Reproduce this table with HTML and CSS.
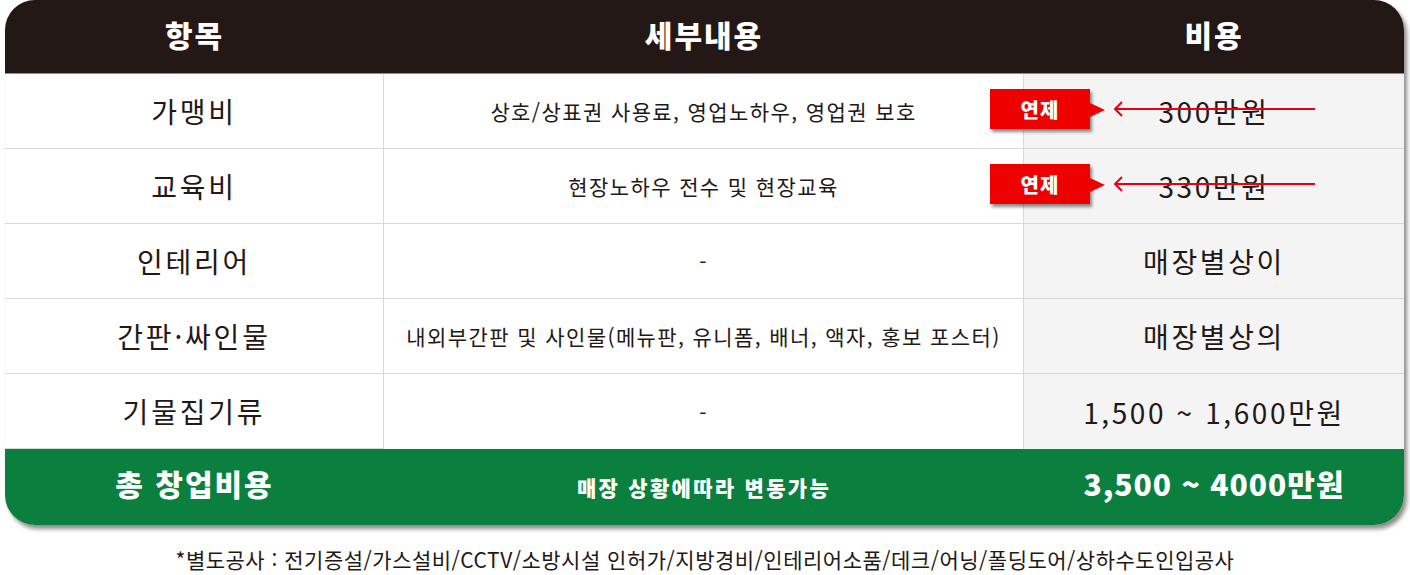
FILE: index.html
```html
<!DOCTYPE html>
<html lang="ko">
<head>
  <meta charset="UTF-8">
  <title>창업비용</title>
  <link rel="stylesheet" href="styles.css">
</head>
<body>
  <div class="cost-table">
    <div class="head">항목</div>
    <div class="head">세부내용</div>
    <div class="head">비용</div>

    <div class="item">가맹비</div>
    <div class="detail">상호/상표권 사용료, 영업노하우, 영업권 보호</div>
    <div class="cost">
      <span class="badge">연제</span>
      <svg class="arrow" width="202" height="16" viewBox="0 0 202 16">
        <path d="M9 1 L2 8 L9 15 M2 8 H202" fill="none" stroke="#e60012" stroke-width="2"/>
      </svg>
      <span class="old">300만원</span>
    </div>

    <div class="item">교육비</div>
    <div class="detail">현장노하우 전수 및 현장교육</div>
    <div class="cost">
      <span class="badge">연제</span>
      <svg class="arrow" width="202" height="16" viewBox="0 0 202 16">
        <path d="M9 1 L2 8 L9 15 M2 8 H202" fill="none" stroke="#e60012" stroke-width="2"/>
      </svg>
      <span class="old">330만원</span>
    </div>

    <div class="item">인테리어</div>
    <div class="detail">-</div>
    <div class="cost">매장별상이</div>

    <div class="item">간판·싸인물</div>
    <div class="detail">내외부간판 및 사인물(메뉴판, 유니폼, 배너, 액자, 홍보 포스터)</div>
    <div class="cost">매장별상의</div>

    <div class="item">기물집기류</div>
    <div class="detail">-</div>
    <div class="cost">1,500 ~ 1,600만원</div>

    <div class="total total-name">총 창업비용</div>
    <div class="total total-note">매장 상황에따라 변동가능</div>
    <div class="total total-sum">3,500 ~ 4000만원</div>
  </div>

  <p class="note">*별도공사 : 전기증설/가스설비/CCTV/소방시설 인허가/지방경비/인테리어소품/데크/어닝/폴딩도어/상하수도인입공사</p>
</body>
</html>
```

FILE: styles.css
```css
body {
  margin: 0;
  background: #fff;
  font-family: "Noto Sans CJK KR", "Noto Sans", sans-serif;
  color: #231815;
}

.cost-table {
  display: grid;
  grid-template-columns: 379px 640px 1fr;
  grid-template-rows: 74px repeat(5, 75px) 76px;
  margin: 0 6px 0 5px;
  border-radius: 30px;
  overflow: hidden;
  background: #fff;
  box-shadow: 3px 4px 4px rgba(0, 0, 0, 0.45);
}

.cost-table > div {
  display: flex;
  align-items: center;
  justify-content: center;
}

.head {
  background: #231815;
  color: #fff;
  font-size: 30px;
  font-weight: 900;
  letter-spacing: 2px;
  padding-bottom: 6px;
  border-bottom: 1px solid #8c8c8c;
}

.item, .detail, .cost {
  border-bottom: 1px solid #d9d9d9;
}

.item {
  font-size: 28px;
  letter-spacing: 2.8px;
  border-right: 1px solid #d9d9d9;
}

.detail {
  font-size: 21px;
  letter-spacing: 1.4px;
  border-right: 1px solid #d9d9d9;
}

.cost {
  position: relative;
  background: #f4f4f4;
  font-size: 28px;
  letter-spacing: 2.6px;
}

.item:nth-last-child(4), .detail:nth-last-child(5), .cost:nth-last-child(4) {
  border-bottom: none;
}

.old {
  color: #231815;
}

.badge {
  position: absolute;
  left: -34px;
  top: 15px;
  width: 100px;
  height: 40px;
  background: #ee0000;
  color: #fff;
  font-size: 20px;
  font-weight: 900;
  letter-spacing: 1px;
  display: flex;
  align-items: center;
  justify-content: center;
  box-shadow: 2px 3px 3px rgba(0, 0, 0, 0.45);
  z-index: 2;
}

.badge::after {
  content: "";
  position: absolute;
  left: 100px;
  top: 14px;
  border-left: 15px solid #ee0000;
  border-top: 7px solid transparent;
  border-bottom: 7px solid transparent;
}

.arrow {
  position: absolute;
  left: 89px;
  top: 27px;
  z-index: 1;
}

.total {
  background: #0b7f3e;
  color: #fff;
  font-weight: 900;
}

.total-name {
  font-size: 30px;
  letter-spacing: 2px;
  padding-bottom: 8px;
}

.total-note {
  font-size: 21px;
  letter-spacing: 2.3px;
}

.total-sum {
  font-size: 30px;
  letter-spacing: 1px;
  padding-bottom: 8px;
}

.note {
  margin: 19px 0 0;
  text-align: center;
  font-size: 21px;
  letter-spacing: 0.5px;
  color: #231815;
}
```
